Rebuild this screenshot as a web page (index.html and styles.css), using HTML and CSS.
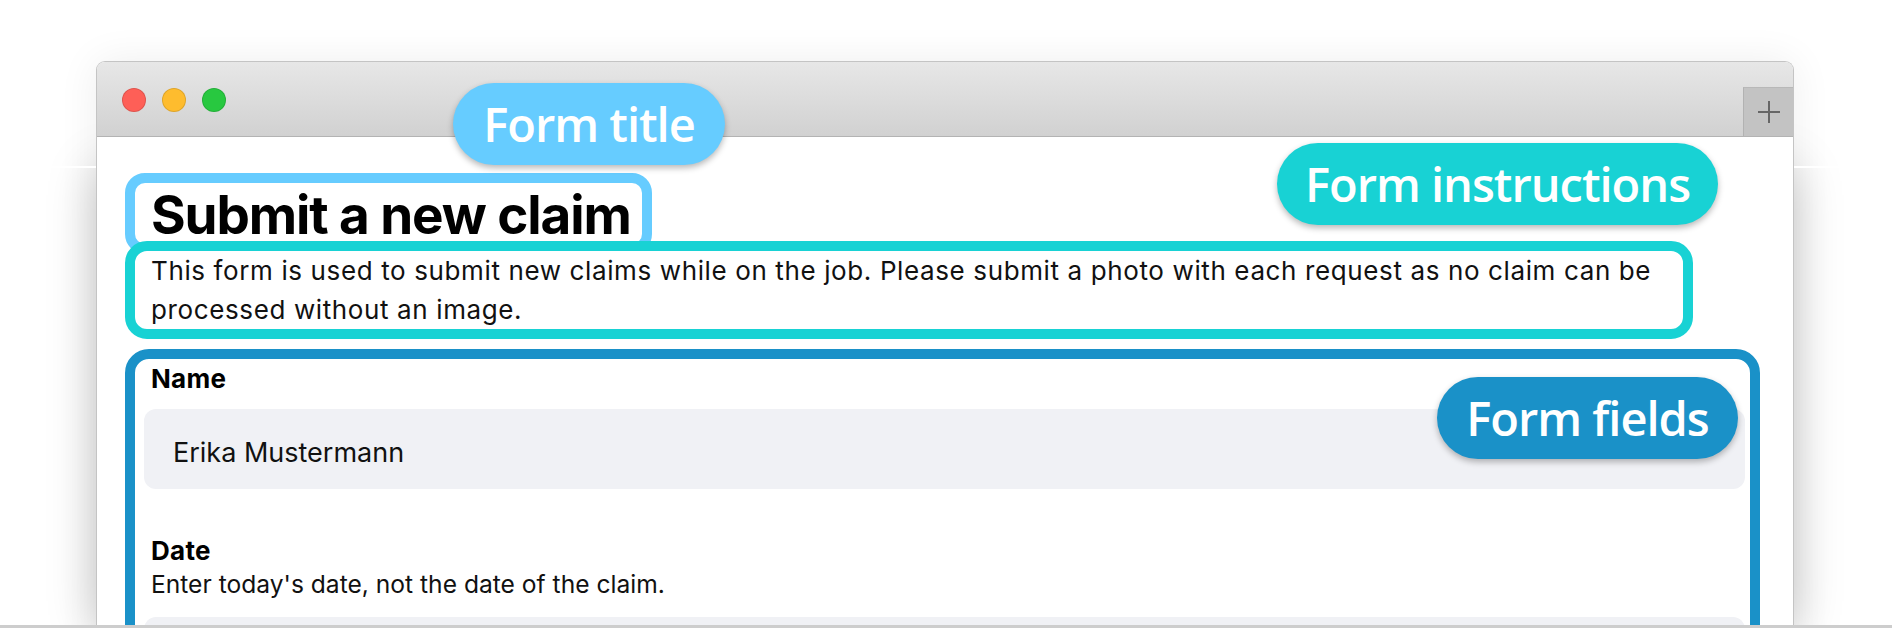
FILE: index.html
```html
<!DOCTYPE html>
<html lang="en">
<head>
    <meta charset="UTF-8">
    <meta name="viewport" content="width=device-width, initial-scale=1.0">
    <title>Submit a new claim</title>
    <link rel="stylesheet" href="styles.css">
</head>
<body>
    <div class="desk">
        <div class="window">
            <div class="titlebar">
                <div class="lights">
                    <span class="light light-close"></span>
                    <span class="light light-min"></span>
                    <span class="light light-max"></span>
                </div>
                <div class="tab-add">
                    <svg width="24" height="24" viewBox="0 0 24 24">
                        <path d="M12 1v22M1 12h22" stroke="#666" stroke-width="2" fill="none"/>
                    </svg>
                </div>
            </div>

            <div class="page">
                <h1 class="mark mark-title">Submit a new claim</h1>
                <p class="mark mark-intro">This form is used to submit new claims while on the job. Please submit a photo with each request as no claim can be processed without an image.</p>

                <form class="mark mark-fields">
                    <label class="field-label">Name</label>
                    <div class="field-input">Erika Mustermann</div>

                    <label class="field-label field-next">Date</label>
                    <p class="field-hint">Enter today's date, not the date of the claim.</p>
                    <div class="field-input field-input-date"></div>
                </form>
            </div>
        </div>

        <!-- annotation badges -->
        <span class="badge badge-title">Form title</span>
        <span class="badge badge-intro">Form instructions</span>
        <span class="badge badge-fields">Form fields</span>

        <div class="floor"></div>
    </div>
</body>
</html>
```

FILE: styles.css
```css
body {
    margin: 0;
    background-color: #fff;
    font-family: "Inter", "Liberation Sans", sans-serif;
    color: #000;
}

.desk {
    position: relative;
    width: 1892px;
    height: 628px;
    overflow: hidden;
    background-color: #fff;
}

/* the white seam across the backdrop, left and right of the window */
.desk::before {
    content: "";
    position: absolute;
    left: 0;
    right: 0;
    top: 166px;
    height: 2px;
    background: linear-gradient(to right, #fff 96px, transparent 96px, transparent 1794px, #fff 1794px);
    z-index: 2;
}

/* darker shade below the seam */
.desk::after {
    content: "";
    position: absolute;
    left: 96px;
    width: 1698px;
    top: 168px;
    bottom: 0;
    box-shadow: 0 0 46px rgba(0, 0, 0, 0.22);
    z-index: 0;
}

.window {
    position: relative;
    z-index: 1;
    box-sizing: border-box;
    width: 1698px;
    height: 600px;
    margin: 61px 0 0 96px;
    background-color: #fff;
    border: 1px solid #c4c4c4;
    border-bottom: none;
    border-radius: 9px 9px 0 0;
    box-shadow: 0 0 40px rgba(0, 0, 0, 0.07);
}

.titlebar {
    display: flex;
    justify-content: space-between;
    height: 74px;
    background: linear-gradient(#e7e7e7, #d1d1d1);
    border-bottom: 1px solid #b3b3b3;
    border-radius: 8px 8px 0 0;
}

.lights {
    display: flex;
    gap: 16px;
    padding: 26px 0 0 25px;
}

.light {
    box-sizing: border-box;
    width: 24px;
    height: 24px;
    border-radius: 50%;
    border: 1px solid rgba(0, 0, 0, 0.12);
}

.light-close {
    background-color: #fe5f57;
}

.light-min {
    background-color: #febc2e;
}

.light-max {
    background-color: #28c840;
}

.tab-add {
    align-self: flex-end;
    display: flex;
    align-items: center;
    justify-content: center;
    width: 49px;
    height: 48px;
    background-color: #c3c3c3;
    border-left: 1px solid #b2b2b2;
    border-top: 1px solid #b8b8b8;
}

.page {
    display: flex;
    flex-direction: column;
    align-items: flex-start;
    padding: 36px 0 0 28px;
}

.mark {
    position: relative;
    margin: 0;
    background-color: #fff;
}

.mark-title {
    border: 10px solid #66ccff;
    border-radius: 20px;
    padding: 4px 11px 0 16px;
    font-size: 53px;
    line-height: 57px;
    font-weight: 700;
    letter-spacing: -1.1px;
}

.mark-intro {
    align-self: stretch;
    margin: -13px 100px 0 0;
    border: 10px solid #18d2d4;
    border-radius: 22px;
    padding: 0 20px 0 16px;
    font-size: 26px;
    line-height: 39px;
    letter-spacing: 0.62px;
    color: #111;
}

.mark-fields {
    align-self: stretch;
    margin: 10px 33px 0 0;
    border: 10px solid #1a91c8;
    border-radius: 24px;
    padding: 3px 5px 0 9px;
    height: 400px;
}

.field-label {
    display: block;
    padding-left: 7px;
    font-size: 26px;
    line-height: 34px;
    font-weight: 700;
    letter-spacing: 0.3px;
}

.field-next {
    margin-top: 45px;
}

.field-hint {
    margin: 0;
    padding-left: 7px;
    font-size: 24.6px;
    line-height: 33px;
    color: #111;
}

.field-input {
    display: flex;
    align-items: center;
    box-sizing: border-box;
    height: 80px;
    margin-top: 13px;
    padding: 6px 0 0 29px;
    background-color: #f0f1f5;
    border-radius: 12px;
    font-size: 27px;
    color: #111;
}

.field-input-date {
    margin-top: 16px;
}

.badge {
    position: absolute;
    z-index: 3;
    display: flex;
    align-items: center;
    justify-content: center;
    height: 82px;
    border-radius: 41px;
    font-family: "Open Sans", "Noto Sans", sans-serif;
    font-weight: 600;
    font-size: 47px;
    letter-spacing: -1px;
    color: #fff;
    box-shadow: 0 3px 6px rgba(0, 0, 0, 0.28);
}

.badge-title {
    left: 453px;
    top: 83px;
    width: 272px;
    background-color: #66ccff;
}

.badge-intro {
    left: 1277px;
    top: 143px;
    width: 441px;
    background-color: #18d2d4;
}

.badge-fields {
    left: 1437px;
    top: 377px;
    width: 301px;
    background-color: #1a91c8;
}

.floor {
    position: absolute;
    z-index: 4;
    left: 0;
    right: 0;
    bottom: 0;
    height: 3px;
    background-color: #cdcdcd;
}
```
